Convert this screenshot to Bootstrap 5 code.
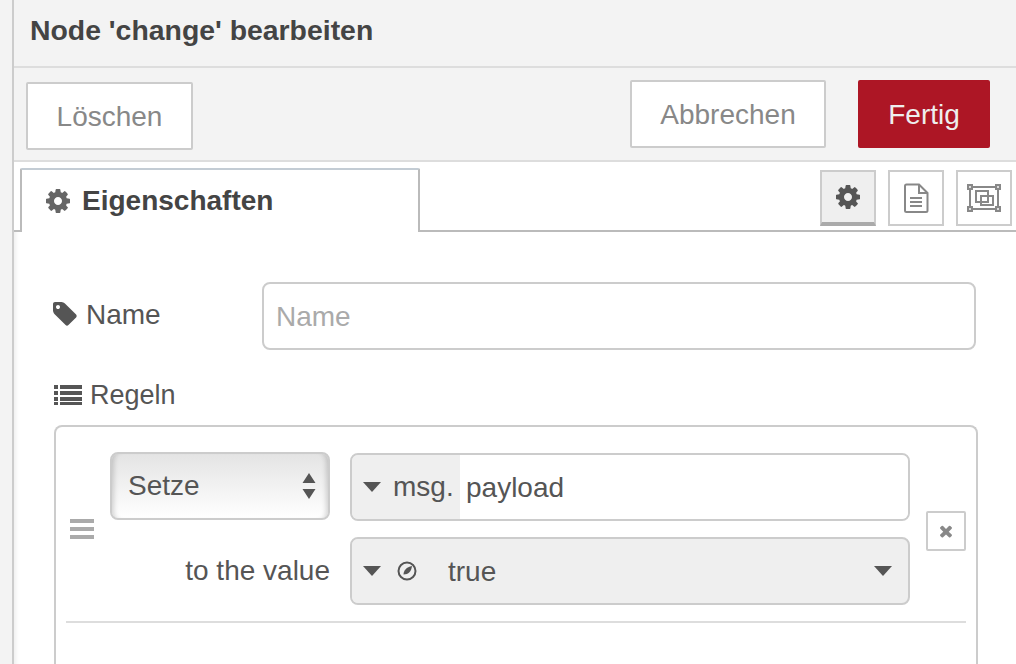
<!DOCTYPE html>
<html lang="de">

<head>
	<meta charset="UTF-8">
	<meta name="viewport" content="width=device-width, initial-scale=1.0">
	<title>Node 'change' bearbeiten</title>
	<link href="https://cdn.jsdelivr.net/npm/bootstrap@5.3.3/dist/css/bootstrap.min.css" rel="stylesheet"
		crossorigin="anonymous">
	<script src="https://cdn.jsdelivr.net/npm/bootstrap@5.3.3/dist/js/bootstrap.bundle.min.js"
		crossorigin="anonymous"></script>
	<style>
		html, body { height: 664px; overflow: hidden; }
		body { font-family: "Liberation Sans", Arial, sans-serif; font-size: 28px; color: #555; background: #f3f3f3; }
		.edge-strip { width: 14px; flex: none; border-right: 2px solid #ccc; background: #f3f3f3; }
		.tray { width: 1002px; height: 664px; flex: none; background: #fff; box-shadow: inset 6px 0 6px -6px rgba(0,0,0,.12); }
		.tray-title { height: 68px; padding: 12px 16px 0; background: #f3f3f3; border-bottom: 2px solid #ddd; color: #444; font-size: 28.4px; font-weight: 700; line-height: 36px; }
		.tray-bar { height: 94px; padding: 12px 26px 0 12px; background: #f3f3f3; border-bottom: 2px solid #ddd; }
		.tray-btn { height: 68px; border: 2px solid #ccc; border-radius: 2px; background: #fff; color: #888; font-size: 28px; line-height: 1; padding: 2px 0 0; }
		.tray-btn:hover { background: #fff; color: #888; border-color: #ccc; }
		.btn-delete { width: 167px; margin-top: 2px; }
		.btn-cancel { width: 196px; }
		.btn-done { width: 132px; margin-left: 32px; background: #ad1625; border-color: #ad1625; color: #eee; }
		.btn-done:hover { background: #ad1625; border-color: #ad1625; color: #eee; }
		.tab-strip { height: 70px; border-bottom: 2px solid #bbb; background: #fff; padding: 6px 4px 0 6px; }
		.tab-main { width: 400px; height: 64px; margin-bottom: -2px; background: #fff; border: 2px solid #bbb; border-bottom: 0; border-top-color: #c3ccd4; border-radius: 2px 2px 0 0; padding: 0 0 0 22px; color: #444; font-weight: 700; font-size: 28px; gap: 10px; }
		.tab-icon { width: 56px; height: 56px; margin-top: 2px; background: #fff; border: 2px solid #ccc; padding: 0; }
		.tab-icon.is-on { background: #efefef; border-bottom: 4px solid #aaa; }
		.tab-icon-gap { margin-left: 12px; }
		.form-area { padding: 50px 38px 0 40px; }
		.field-label { width: 208px; flex: none; gap: 7px; margin-top: -2px; }
		.tag-icon { margin: -2px 0 0 -3px; }
		.name-input { width: 714px; height: 68px; border: 2px solid #ccc; border-radius: 8px; font-size: 28px; padding: 2px 12px 0; color: #555; }
		.name-input::placeholder { color: #aaa; opacity: 1; }
		.rules-label { height: 30px; margin-top: 30px; gap: 8px; font-size: 27px; }
		.rules-box { width: 924px; height: 239px; margin-top: 15px; border: 2px solid #ccc; border-bottom: 0; border-radius: 8px 8px 0 0; padding: 25px 10px 0; }
		.rule-row { width: 900px; padding-bottom: 16px; border-bottom: 2px solid #ddd; }
		.handle-col { width: 44px; flex: none; padding: 67px 0 0 4px; }
		.handle-bar { display: block; width: 24px; height: 4px; margin-bottom: 4px; background: #aaa; }
		.action-select { width: 220px; height: 68px; flex: none; border: 2px solid #ccc; border-radius: 8px; padding: 0 16px; font: inherit; color: #555; appearance: none; background: linear-gradient(#e4e4e4, #fff); box-shadow: inset 6px 0 5px -4px rgba(0,0,0,.16), inset -6px 0 5px -4px rgba(0,0,0,.16); }
		.select-wrap { width: 220px; flex: none; }
		.select-arrows { position: absolute; top: 21px; right: 14px; }
		.typed-input { width: 560px; height: 68px; margin-left: 20px; border: 2px solid #ccc; border-radius: 8px; overflow: hidden; background: #efefef; }
		.typed-first { margin-top: 1px; }
		.typed-prefix { width: 108px; flex: none; padding-left: 11px; gap: 12px; background: #efefef; }
		.typed-prefix.is-bool { width: 96px; gap: 16px; }
		.typed-value { flex: 1; min-width: 0; height: 100%; border: 0; outline: 0; padding: 2px 6px 0; background: #fff; font: inherit; color: #555; }
		.bool-text { flex: 1; padding-top: 2px; }
		.caret-down { width: 18px; height: 10px; flex: none; }
		.value-label { width: 220px; flex: none; text-align: right; }
		.remove-btn { width: 40px; height: 40px; flex: none; margin: 59px 0 0 16px; border: 2px solid #ccc; border-radius: 2px; background: #fff; padding: 0; }
	</style>
</head>

<body>
	<div class="d-flex">
		<div class="edge-strip"></div>
		<div class="tray">
			<div class="tray-title">Node 'change' bearbeiten</div>

			<div class="tray-bar d-flex align-items-start">
				<button type="button" class="btn tray-btn btn-delete">Löschen</button>
				<button type="button" class="btn tray-btn btn-cancel ms-auto">Abbrechen</button>
				<button type="button" class="btn tray-btn btn-done">Fertig</button>
			</div>

			<div class="tab-strip d-flex align-items-start">
				<div class="tab-main d-flex align-items-center">
					<svg width="28" height="28" viewBox="0 0 1792 1792" fill="#666"><path d="M1152 896q0-106-75-181t-181-75-181 75-75 181 75 181 181 75 181-75 75-181zm512-109v222q0 12-8 23t-20 13l-185 28q-19 54-39 91 35 50 107 138 10 12 10 25t-9 23q-27 37-99 108t-94 71q-12 0-26-9l-138-108q-44 23-91 38-16 136-29 186-7 28-36 28h-222q-14 0-24.500-8.500t-11.500-21.500l-28-184q-49-16-90-37l-141 107q-10 9-25 9-14 0-25-11-126-114-165-168-7-10-7-23 0-12 8-23 15-21 51-66.500t54-70.500q-27-50-41-99l-183-27q-13-2-21-12.500t-8-23.500v-222q0-12 8-23t19-13l186-28q14-46 39-92-40-57-107-138-10-12-10-24 0-10 9-23 26-36 98.500-107.500t94.500-71.500q13 0 26 10l138 107q44-23 91-38 16-136 29-186 7-28 36-28h222q14 0 24.500 8.500t11.500 21.500l28 184q49 16 90 37l142-107q9-9 24-9 13 0 25 10 129 119 165 170 7 8 7 22 0 12-8 23-15 21-51 66.500t-54 70.500q26 50 41 98l183 28q13 2 21 12.500t8 23.500z"/></svg>
					<span>Eigenschaften</span>
				</div>
				<button type="button" class="btn tab-icon is-on ms-auto rounded-0 d-flex align-items-center justify-content-center">
					<svg width="28" height="28" viewBox="0 0 1792 1792" fill="#555"><path d="M1152 896q0-106-75-181t-181-75-181 75-75 181 75 181 181 75 181-75 75-181zm512-109v222q0 12-8 23t-20 13l-185 28q-19 54-39 91 35 50 107 138 10 12 10 25t-9 23q-27 37-99 108t-94 71q-12 0-26-9l-138-108q-44 23-91 38-16 136-29 186-7 28-36 28h-222q-14 0-24.500-8.500t-11.500-21.500l-28-184q-49-16-90-37l-141 107q-10 9-25 9-14 0-25-11-126-114-165-168-7-10-7-23 0-12 8-23 15-21 51-66.500t54-70.500q-27-50-41-99l-183-27q-13-2-21-12.500t-8-23.500v-222q0-12 8-23t19-13l186-28q14-46 39-92-40-57-107-138-10-12-10-24 0-10 9-23 26-36 98.500-107.500t94.500-71.500q13 0 26 10l138 107q44-23 91-38 16-136 29-186 7-28 36-28h222q14 0 24.500 8.500t11.500 21.500l28 184q49 16 90 37l142-107q9-9 24-9 13 0 25 10 129 119 165 170 7 8 7 22 0 12-8 23-15 21-51 66.500t-54 70.500q26 50 41 98l183 28q13 2 21 12.500t8 23.500z"/></svg>
				</button>
				<button type="button" class="btn tab-icon tab-icon-gap rounded-0 d-flex align-items-center justify-content-center">
					<svg width="26" height="30" viewBox="0 0 26 30" fill="none" stroke="#888" stroke-width="2"><path d="M2 3a1.500 1.500 0 0 1 1.500-1.500H16L24.500 10v17.500A1.500 1.500 0 0 1 23 29H3.500A1.500 1.500 0 0 1 2 27.500z"/><path d="M16 1.500V10h8.500M7 15h12M7 19h12M7 23h12"/></svg>
				</button>
				<button type="button" class="btn tab-icon tab-icon-gap rounded-0 d-flex align-items-center justify-content-center">
					<svg width="34" height="30" viewBox="0 0 34 30" fill="none" stroke="#888" stroke-width="2"><path d="M3 4h28v22H3z"/><path d="M9 8h12v11H9zM14 13h12v9H14z"/><g fill="#ddd"><rect x="1" y="2" width="4" height="4"/><rect x="29" y="2" width="4" height="4"/><rect x="1" y="24" width="4" height="4"/><rect x="29" y="24" width="4" height="4"/></g></svg>
				</button>
			</div>

			<div class="form-area">
				<div class="d-flex align-items-center">
					<label class="field-label d-flex align-items-center" for="node-name">
						<svg class="tag-icon" width="28" height="28" viewBox="0 0 1792 1792" fill="#555"><path d="M576 448q0-53-37.500-90.500t-90.500-37.500-90.500 37.500-37.500 90.500 37.500 90.500 90.500 37.500 90.500-37.500 37.500-90.500zm1067 576q0 53-37 90l-491 492q-39 37-91 37-53 0-90-37l-715-716q-38-37-64.500-101t-26.500-117v-416q0-52 38-90t90-38h416q53 0 117 26.500t102 64.500l715 714q37 39 37 91z"/></svg>
						<span>Name</span>
					</label>
					<input id="node-name" class="form-control name-input" type="text" placeholder="Name">
				</div>

				<div class="rules-label d-flex align-items-center">
					<svg width="28" height="22" viewBox="0 0 28 22" fill="#555"><path d="M0 1h4v4H0zM6 1h22v4H6zM0 7h4v4H0zM6 7h22v4H6zM0 13h4v4H0zM6 13h22v4H6zM0 18h4v3H0zM6 18h22v3H6z"/></svg>
					<span>Regeln</span>
				</div>

				<div class="rules-box">
					<div class="rule-row d-flex align-items-start">
						<div class="handle-col">
							<span class="handle-bar"></span>
							<span class="handle-bar"></span>
							<span class="handle-bar"></span>
						</div>
						<div>
							<div class="d-flex">
								<div class="select-wrap position-relative">
									<select class="action-select">
										<option>Setze</option>
									</select>
									<svg class="select-arrows" width="14" height="26" viewBox="0 0 14 26" fill="#555"><path d="M7 0l6.500 10H.5zM7 26L.5 16h13z"/></svg>
								</div>
								<div class="typed-input typed-first d-flex align-items-center">
									<div class="typed-prefix d-flex align-items-center h-100">
										<svg class="caret-down" viewBox="0 0 18 10" fill="#555"><path d="M0 0h18L9 10z"/></svg>
										<span>msg.</span>
									</div>
									<input class="typed-value" type="text" value="payload">
								</div>
							</div>
							<div class="d-flex align-items-center mt-3">
								<div class="value-label">to the value</div>
								<div class="typed-input d-flex align-items-center">
									<div class="typed-prefix is-bool d-flex align-items-center h-100">
										<svg class="caret-down" viewBox="0 0 18 10" fill="#555"><path d="M0 0h18L9 10z"/></svg>
										<svg width="20" height="20" viewBox="0 0 20 20" fill="none" stroke="#555" stroke-width="2"><circle cx="10" cy="10" r="8.500"/><path d="M6.500 13.500C6.500 9.500 9.500 6 15 5c-.5 5-3.500 8.500-8.500 8.500z" fill="#555" stroke="none"/></svg>
									</div>
									<span class="bool-text">true</span>
									<svg class="caret-down me-3" viewBox="0 0 18 10" fill="#555"><path d="M0 0h18L9 10z"/></svg>
								</div>
							</div>
						</div>
						<button type="button" class="btn remove-btn d-flex align-items-center justify-content-center">
							<svg width="18" height="18" viewBox="0 0 1792 1792" fill="#888"><path d="M1490 1322q0 40-28 68l-136 136q-28 28-68 28t-68-28l-294-294-294 294q-28 28-68 28t-68-28l-136-136q-28-28-28-68t28-68l294-294-294-294q-28-28-28-68t28-68l136-136q28-28 68-28t68 28l294 294 294-294q28-28 68-28t68 28l136 136q28 28 28 68t-28 68l-294 294 294 294q28 28 28 68z"/></svg>
						</button>
					</div>
				</div>
			</div>
		</div>
	</div>
</body>

</html>
